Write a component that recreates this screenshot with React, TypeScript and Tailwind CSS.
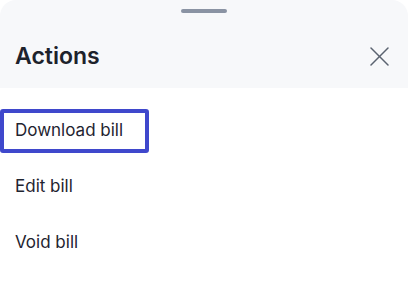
const ACTIONS = ['Download bill', 'Edit bill', 'Void bill'];

export default function App() {
  return (
    <div className="w-[408px] h-[283px] bg-white overflow-hidden font-['Inter',sans-serif]">
      <div className="bg-[#f7f8fa] rounded-t-2xl h-[88px] flex flex-col">
        <div className="flex justify-center pt-[9px]">
          <div className="w-[46px] h-1 rounded-full bg-[#8a93a3]" />
        </div>
        <div className="flex items-center justify-between pl-[15px] pr-[19px] mt-[32px]">
          <h2 className="text-[23px] leading-none font-semibold text-[#1d222c]">Actions</h2>
          <button type="button" aria-label="Close" className="text-[#5b6370]">
            <svg width="19" height="19" viewBox="0 0 19 19" fill="none" stroke="currentColor" strokeWidth="1.5" strokeLinecap="round">
              <line x1="1" y1="1" x2="18" y2="18" />
              <line x1="18" y1="1" x2="1" y2="18" />
            </svg>
          </button>
        </div>
      </div>
      <div className="flex flex-col items-start gap-3 pt-[21px]">
        {ACTIONS.map((a, i) => (
          <button
            key={a}
            type="button"
            className={`h-[44px] px-[15px] text-[17px] text-[#1f2430] text-left rounded-[3px] ${
              i === 0 ? 'outline-4 -outline-offset-4 outline-[#3f48cc] w-[149px]' : ''
            }`}
          >
            {a}
          </button>
        ))}
      </div>
    </div>
  );
}
